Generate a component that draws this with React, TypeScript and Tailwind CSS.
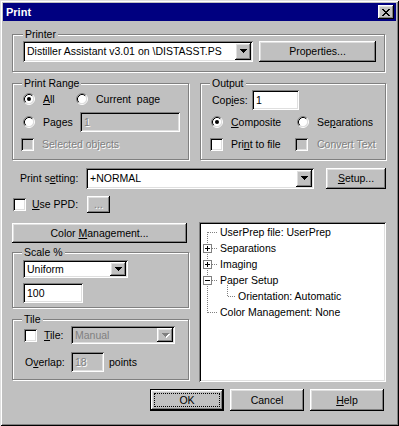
import React from "react";

const RAISED =
  "shadow-[inset_-1px_-1px_#000,inset_1px_1px_#fff,inset_-2px_-2px_#808080,inset_2px_2px_#dfdfdf]";
const SUNKEN =
  "shadow-[inset_1px_1px_#808080,inset_-1px_-1px_#fff,inset_2px_2px_#000,inset_-2px_-2px_#dfdfdf]";
const ETCH = "border border-[#808080] shadow-[inset_1px_1px_#fff,1px_1px_#fff]";
const DIS = "text-[#808080] [text-shadow:1px_1px_0_#fff]";

function Radio({ checked }: { checked?: boolean }) {
  return (
    <svg width="12" height="12" viewBox="0 0 12 12" className="shrink-0 block">
      <circle cx="6" cy="6" r="4.5" fill="#fff" />
      <path d="M2.11 9.89A5.5 5.5 0 0 1 9.89 2.11" fill="none" stroke="#808080" />
      <path d="M9.89 2.11A5.5 5.5 0 0 1 2.11 9.89" fill="none" stroke="#fff" />
      <path d="M2.82 9.18A4.5 4.5 0 0 1 9.18 2.82" fill="none" stroke="#000" />
      <path d="M9.18 2.82A4.5 4.5 0 0 1 2.82 9.18" fill="none" stroke="#dfdfdf" />
      {checked && <circle cx="6" cy="6" r="2" fill="#000" />}
    </svg>
  );
}

function Check({ disabled }: { disabled?: boolean }) {
  return (
    <div
      className={`w-[13px] h-[13px] shrink-0 ${SUNKEN} ${disabled ? "bg-[#c0c0c0]" : "bg-white"}`}
    />
  );
}

function Arrow({ disabled }: { disabled?: boolean }) {
  return (
    <svg width="8" height="5" viewBox="0 0 8 5" shapeRendering="crispEdges" className="block">
      {disabled && (
        <path d="M1 1h7v1H1zM2 2h5v1H2zM3 3h3v1H3zM4 4h1v1H4z" fill="#fff" />
      )}
      <path
        d="M0 0h7v1H0zM1 1h5v1H1zM2 2h3v1H2zM3 3h1v1H3z"
        fill={disabled ? "#808080" : "#000"}
      />
    </svg>
  );
}

function Combo({
  text,
  className,
  disabled,
}: {
  text: string;
  className: string;
  disabled?: boolean;
}) {
  return (
    <div
      className={`flex p-[2px] shrink-0 ${SUNKEN} ${disabled ? "bg-[#c0c0c0]" : "bg-white"} ${className}`}
    >
      <div
        className={`flex-1 flex items-center pl-[2px] overflow-hidden whitespace-nowrap ${
          disabled ? "text-[#808080]" : ""
        }`}
      >
        {text}
      </div>
      <div
        className={`w-[16px] flex items-center justify-center pl-[1px] bg-[#c0c0c0] ${RAISED}`}
      >
        <Arrow disabled={disabled} />
      </div>
    </div>
  );
}

function Btn({
  children,
  className,
}: {
  children: React.ReactNode;
  className: string;
}) {
  return (
    <div
      className={`flex items-center justify-center shrink-0 bg-[#c0c0c0] ${RAISED} ${className}`}
    >
      {children}
    </div>
  );
}

function Group({
  label,
  className,
  labelLeft,
  children,
}: {
  label: string;
  className: string;
  labelLeft?: string;
  children?: React.ReactNode;
}) {
  return (
    <div className={`relative shrink-0 ${ETCH} ${className}`}>
      <span
        className={`absolute top-[-8px] ${labelLeft ?? "left-[9px]"} bg-[#c0c0c0] px-[2px] leading-[14px] whitespace-nowrap`}
      >
        {label}
      </span>
      {children}
    </div>
  );
}

const CLOSE = [
  "XX....XX",
  ".XX..XX.",
  "..XXXX..",
  "...XX...",
  "..XXXX..",
  ".XX..XX.",
  "XX....XX",
];

function CloseGlyph() {
  const rects: React.ReactNode[] = [];
  CLOSE.forEach((row, y) =>
    row.split("").forEach((c, x) => {
      if (c === "X") rects.push(<rect key={`${x}-${y}`} x={x} y={y} width="1" height="1" />);
    })
  );
  return (
    <svg width="8" height="7" viewBox="0 0 8 7" shapeRendering="crispEdges" className="block">
      <g fill="#000">{rects}</g>
    </svg>
  );
}

function Tree() {
  const top = [10, 26, 42, 58, 90];
  const boxes: { y: number; plus: boolean }[] = [
    { y: 26, plus: true },
    { y: 42, plus: true },
    { y: 58, plus: false },
  ];
  const items: [string, number][] = [
    ["UserPrep file: UserPrep", 21],
    ["Separations", 21],
    ["Imaging", 21],
    ["Paper Setup", 21],
    ["Orientation: Automatic", 39],
    ["Color Management: None", 21],
  ];
  return (
    <div className={`relative w-[187px] h-[160px] shrink-0 bg-white ${SUNKEN}`}>
      <svg
        className="absolute left-0 top-0"
        width="187"
        height="160"
        shapeRendering="crispEdges"
      >
        <g stroke="#808080" strokeDasharray="1 1" fill="none">
          <line x1="8.5" y1="10" x2="8.5" y2="91" />
          {top.map((y) => (
            <line key={y} x1="9" y1={y + 0.5} x2="19" y2={y + 0.5} />
          ))}
          <line x1="28.5" y1="63" x2="28.5" y2="75" />
          <line x1="29" y1="74.5" x2="37" y2="74.5" />
        </g>
        {boxes.map((b) => (
          <g key={b.y}>
            <rect x="4.5" y={b.y - 3.5} width="8" height="8" fill="#fff" stroke="#808080" />
            <line x1="6" y1={b.y + 0.5} x2="11" y2={b.y + 0.5} stroke="#000" />
            {b.plus && <line x1="8.5" y1={b.y - 2} x2="8.5" y2={b.y + 3} stroke="#000" />}
          </g>
        ))}
      </svg>
      <div className="relative flex flex-col pt-[2px]">
        {items.map(([t, pl], i) => (
          <div
            key={i}
            className="h-[16px] leading-[16px] whitespace-nowrap"
            style={{ paddingLeft: pl }}
          >
            {t}
          </div>
        ))}
      </div>
    </div>
  );
}

export default function App() {
  return (
    <div
      className={`w-[399px] h-[426px] bg-[#c0c0c0] p-[3px] flex flex-col text-[10.5px] leading-[13px] text-black font-['Liberation_Sans',Arial,sans-serif] shadow-[inset_1px_1px_#dfdfdf,inset_-1px_-1px_#000,inset_2px_2px_#fff,inset_-2px_-2px_#808080]`}
    >
      {/* Title bar */}
      <div className="h-[18px] bg-[#000080] flex items-center justify-between pl-[3px] pr-[2px] shrink-0">
        <span className="text-white font-bold text-[11px]">Print</span>
        <div className={`w-[16px] h-[14px] flex items-center justify-center bg-[#c0c0c0] ${RAISED}`}>
          <CloseGlyph />
        </div>
      </div>

      <div className="flex flex-col pl-[9px]">
        {/* Printer */}
        <Group label="Printer" labelLeft="left-[10px]" className="mt-[13px] w-[373px] h-[38px]">
          <div className="flex items-start pt-[6px] pl-[10px] gap-[6px]">
            <Combo
              text="Distiller Assistant v3.01 on \DISTASST.PS"
              className="w-[230px] h-[21px]"
            />
            <Btn className="w-[117px] h-[21px]">Properties...</Btn>
          </div>
        </Group>

        {/* Print Range + Output */}
        <div className="flex mt-[11px] gap-[11px]">
          <Group label="Print Range" className="w-[177px] h-[77px]">
            <div className="flex flex-col pl-[10px]">
              <div className="flex items-center h-[16px] mt-[7px]">
                <div className="flex items-center w-[53px]">
                  <Radio checked />
                  <span className="ml-[8px]">
                    <u>A</u>ll
                  </span>
                </div>
                <Radio />
                <span className="ml-[8px] whitespace-pre">Current  page</span>
              </div>
              <div className="flex items-center h-[20px] mt-[5px]">
                <div className="flex items-center w-[57px]">
                  <Radio />
                  <span className="ml-[8px]">Pages</span>
                </div>
                <div className={`w-[100px] h-[20px] flex items-center pl-[4px] bg-[#c0c0c0] ${SUNKEN}`}>
                  <span className={DIS}>1</span>
                </div>
              </div>
              <div className="flex items-center h-[13px] mt-[6px] ml-[-2px]">
                <Check disabled />
                <span className={`ml-[8px] ${DIS}`}>Selected objects</span>
              </div>
            </div>
          </Group>

          <Group label="Output" className="w-[186px] h-[77px]">
            <div className="flex flex-col">
              <div className="flex items-center h-[20px] mt-[6px] pl-[11px]">
                <span className="w-[40px]">
                  Cop<u>i</u>es:
                </span>
                <div className={`w-[47px] h-[20px] flex items-center pl-[4px] bg-white ${SUNKEN}`}>
                  1
                </div>
              </div>
              <div className="flex items-center h-[16px] mt-[4px] pl-[10px]">
                <div className="flex items-center w-[86px]">
                  <Radio checked />
                  <span className="ml-[8px]">
                    <u>C</u>omposite
                  </span>
                </div>
                <Radio />
                <span className="ml-[8px]">
                  Se<u>p</u>arations
                </span>
              </div>
              <div className="flex items-center h-[13px] mt-[8px] pl-[9px]">
                <div className="flex items-center w-[85px]">
                  <Check />
                  <span className="ml-[8px]">
                    Pri<u>n</u>t to file
                  </span>
                </div>
                <Check disabled />
                <span className={`ml-[9px] ${DIS}`}>Convert Text</span>
              </div>
            </div>
          </Group>
        </div>

        {/* Print setting */}
        <div className="flex items-center mt-[8px] h-[21px]">
          <span className="ml-[8px] w-[66px]">
            Print s<u>e</u>tting:
          </span>
          <Combo text="+NORMAL" className="w-[228px] h-[21px]" />
          <Btn className="ml-[12px] w-[60px] h-[21px]">
            <span>
              <u>S</u>etup...
            </span>
          </Btn>
        </div>

        {/* Use PPD */}
        <div className="flex items-center mt-[7px] h-[17px]">
          <div className="flex items-center w-[75px] pl-[1px]">
            <Check />
            <span className="ml-[6px]">
              <u>U</u>se PPD:
            </span>
          </div>
          <Btn className="w-[23px] h-[17px]">
            <span className={`${DIS} leading-[10px] pb-[2px]`}>...</span>
          </Btn>
        </div>

        {/* Bottom area */}
        <div className="flex mt-[9px] gap-[10px]">
          <div className="flex flex-col w-[177px]">
            <Btn className="mt-[1px] w-[175px] h-[20px]">
              <span>
                Color <u>M</u>anagement...
              </span>
            </Btn>
            <Group label="Scale %" className="mt-[9px] w-[177px] h-[56px]">
              <div className="flex flex-col pl-[10px]">
                <Combo text="Uniform" className="mt-[7px] w-[105px] h-[18px]" />
                <div className={`mt-[5px] w-[60px] h-[20px] flex items-center pl-[4px] bg-white ${SUNKEN}`}>
                  100
                </div>
              </div>
            </Group>
            <Group label="Tile" className="mt-[11px] w-[177px] h-[61px]">
              <div className="flex flex-col">
                <div className="flex items-center h-[18px] mt-[6px] pl-[11px]">
                  <div className="flex items-center w-[47px]">
                    <Check />
                    <span className="ml-[7px]">
                      <u>T</u>ile:
                    </span>
                  </div>
                  <Combo text="Manual" disabled className="w-[104px] h-[18px]" />
                </div>
                <div className="flex items-center h-[20px] mt-[8px] pl-[12px]">
                  <span className="w-[46px]">
                    O<u>v</u>erlap:
                  </span>
                  <div className={`w-[33px] h-[20px] flex items-center pl-[4px] bg-[#c0c0c0] ${SUNKEN}`}>
                    <span className={DIS}>18</span>
                  </div>
                  <span className="ml-[5px]">points</span>
                </div>
              </div>
            </Group>
          </div>
          <Tree />
        </div>

        {/* Buttons */}
        <div className="flex mt-[7px] ml-[138px] gap-[6px]">
          <div className="relative w-[74px] h-[22px] flex items-center justify-center bg-[#c0c0c0] shadow-[inset_0_0_0_1px_#000,inset_-2px_-2px_#000,inset_2px_2px_#fff,inset_-3px_-3px_#808080,inset_3px_3px_#dfdfdf]">
            <div className="absolute inset-[4px] border border-dotted border-black" />
            OK
          </div>
          <Btn className="w-[74px] h-[22px]">Cancel</Btn>
          <Btn className="w-[74px] h-[22px]">
            <span>
              <u>H</u>elp
            </span>
          </Btn>
        </div>
      </div>
    </div>
  );
}
